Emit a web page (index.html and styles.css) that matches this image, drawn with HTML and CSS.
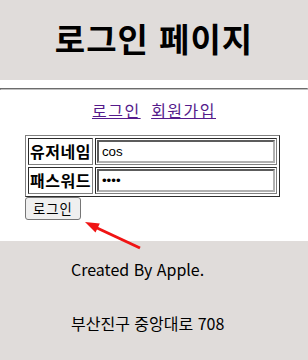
FILE: index.html
```html
<!DOCTYPE html>
<html lang="ko">
<head>
    <meta charset="UTF-8">
    <meta name="viewport" content="width=device-width, initial-scale=1.0">
    <title>로그인 페이지</title>
    <link rel="stylesheet" href="styles.css">
</head>
<body>
    <div class="header">
        <h1>로그인 페이지</h1>
    </div>
    <hr>

    <div class="menu">
        <a href="#">로그인</a>
        <a href="#">회원가입</a>
    </div>

    <form class="login-form">
        <table class="login-table">
            <tr>
                <th>유저네임</th>
                <td><input type="text" name="username" value="cos"></td>
            </tr>
            <tr>
                <th>패스워드</th>
                <td><input type="password" name="password" value="1234"></td>
            </tr>
        </table>
        <button type="button">로그인</button>
    </form>

    <div class="footer">
        <p>Created By Apple.</p>
        <p>부산진구 중앙대로 708</p>
    </div>

    <!-- 화살표 표시 -->
    <svg class="arrow" width="308" height="360" viewBox="0 0 308 360">
        <line x1="96" y1="227.5" x2="140" y2="248" stroke="#f01414" stroke-width="3"/>
        <polygon points="85,222 95.5,232.5 99.8,223.5" fill="#f01414"/>
    </svg>
</body>
</html>
```

FILE: styles.css
```css
body {
    font-family: "Noto Sans CJK KR", "Noto Sans", sans-serif;
    margin: 0;
    position: relative;
    min-height: 360px;
    overflow: hidden;
    background-color: #fff;
}

.header {
    background-color: #e0dcda;
    height: 80px;
    display: flex;
    align-items: center;
    justify-content: center;
}

.header h1 {
    margin: 0 0 5px 0;
    font-size: 33px;
    letter-spacing: 1px;
    font-weight: bold;
    color: #000;
}

hr {
    margin: 8px 0;
    border: 1px inset #c0c0c0;
}

.menu {
    text-align: center;
    font-size: 16px;
    padding-top: 1px;
    line-height: 23px;
}

.menu a {
    color: #551a8b;
    letter-spacing: 1.5px;
    margin: 0 3px;
}

.login-form {
    margin: 13px 0 0 25px;
}

.login-table {
    border: 1px outset #808080;
    border-spacing: 2px;
}

.login-table th,
.login-table td {
    border: 1px inset #808080;
    padding: 1px;
}

.login-table th {
    font-size: 16px;
    font-weight: bold;
    letter-spacing: 0.5px;
    line-height: 23px;
    text-align: left;
}

.login-table input {
    width: 178px;
    height: 23px;
    box-sizing: border-box;
    border: 2px inset #b0b0b0;
    padding: 1px 3px;
    font-family: "Liberation Sans", Arial, sans-serif;
    font-size: 13.33px;
    display: block;
}

.login-form button {
    display: block;
    font-family: "Noto Sans CJK KR", sans-serif;
    font-size: 13.33px;
    letter-spacing: 1px;
    line-height: 19px;
    padding: 1px 7px;
    background-color: #efefef;
    border: 1px solid #767676;
    border-radius: 3px;
}

.footer {
    background-color: #e0dcda;
    margin-top: 21px;
    padding: 16px 0 20px 71px;
    font-size: 16px;
}

.footer p {
    margin: 0 0 30px 0;
    line-height: 24px;
}

.arrow {
    position: absolute;
    top: 0;
    left: 0;
    pointer-events: none;
}
```
